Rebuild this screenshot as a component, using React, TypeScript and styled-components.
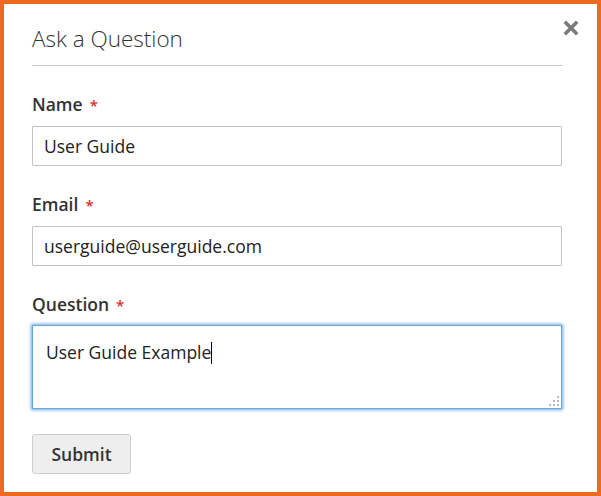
import React, { ReactElement } from 'react';
import styled, { createGlobalStyle } from 'styled-components';

const GlobalStyle = createGlobalStyle`
    html, body {
        margin: 0;
        padding: 0;
        background: #fff;
    }
    * {
        box-sizing: border-box;
    }
`;

const Frame = styled.div`
    width: 601px;
    height: 496px;
    border: 4px solid #ec6a21;
    background: #fff;
    position: relative;
    padding: 19px 35px 0 28px;
    font-family: 'Open Sans', 'Liberation Sans', sans-serif;
    color: #333;
`;

const Header = styled.header`
    border-bottom: 1px solid #c6c6c6;
    padding-bottom: 12px;
    margin-bottom: 28px;
`;

const Title = styled.h1`
    margin: 0;
    font-size: 22.5px;
    line-height: 30px;
    font-weight: 300;
    color: #333;
    transform: translateY(1px);
`;

const CloseButton = styled.button`
    position: absolute;
    top: 14px;
    right: 16px;
    width: 20px;
    height: 20px;
    padding: 0;
    border: 0;
    background: none;
    display: flex;
    align-items: center;
    justify-content: center;
    cursor: pointer;
`;

const Form = styled.form`
    display: flex;
    flex-direction: column;
`;

const Field = styled.div`
    margin-bottom: 28px;
`;

const Label = styled.label`
    display: block;
    font-size: 17.5px;
    line-height: 20px;
    height: 20px;
    font-weight: 600;
    color: #333;
    margin-bottom: 12px;
`;

const Required = styled.span`
    display: inline-block;
    line-height: 1;
    color: #e02b27;
    margin-left: 7px;
    font-size: 15px;
`;

const Input = styled.input`
    display: block;
    width: 100%;
    height: 40px;
    padding: 0 11px;
    border: 1px solid #c2c2c2;
    border-radius: 1px;
    font-family: 'Open Sans', 'Liberation Sans', sans-serif;
    font-size: 17.5px;
    color: #222;
    outline: none;
`;

const TextAreaBox = styled.div`
    position: relative;
    width: 100%;
    height: 84px;
    margin-top: -1px;
    padding: 11px 13px;
    border: 1px solid #68a8e0;
    box-shadow: 0 0 3px 1px #68a8e0;
    font-size: 17.5px;
    line-height: 30px;
    color: #222;
`;

const Caret = styled.span`
    display: inline-block;
    width: 1px;
    height: 22px;
    background: #000;
    vertical-align: -5px;
`;

const Grip = styled.svg`
    position: absolute;
    right: 2px;
    bottom: 2px;
`;

const SubmitButton = styled.button`
    align-self: flex-start;
    margin-top: -3px;
    width: 99px;
    height: 40px;
    background: #eee;
    border: 1px solid #cdcdcd;
    border-radius: 3px;
    font-family: 'Open Sans', 'Liberation Sans', sans-serif;
    font-size: 17.5px;
    font-weight: 600;
    color: #333;
    cursor: pointer;
`;

export default function App(): ReactElement {
    return (
        <>
            <GlobalStyle />
            <Frame>
                <Header>
                    <Title>Ask a Question</Title>
                </Header>
                <CloseButton aria-label="Close">
                    <svg width="16" height="16" viewBox="0 0 16 16">
                        <path
                            d="M1.8 1.8 L14.2 14.2 M14.2 1.8 L1.8 14.2"
                            stroke="#7a7a7a"
                            strokeWidth="3.6"
                            strokeLinecap="butt"
                        />
                    </svg>
                </CloseButton>
                <Form onSubmit={e => e.preventDefault()}>
                    <Field>
                        <Label htmlFor="name">
                            Name<Required>*</Required>
                        </Label>
                        <Input id="name" type="text" defaultValue="User Guide" />
                    </Field>
                    <Field>
                        <Label htmlFor="email">
                            Email<Required>*</Required>
                        </Label>
                        <Input
                            id="email"
                            type="text"
                            defaultValue="userguide@userguide.com"
                        />
                    </Field>
                    <Field>
                        <Label>
                            Question<Required>*</Required>
                        </Label>
                        <TextAreaBox>
                            User Guide Example
                            <Caret />
                            <Grip width="10" height="10" viewBox="0 0 10 10">
                                <rect x="8" y="0" width="2" height="2" fill="#bbb" />
                                <rect x="4" y="4" width="2" height="2" fill="#bbb" />
                                <rect x="8" y="4" width="2" height="2" fill="#bbb" />
                                <rect x="0" y="8" width="2" height="2" fill="#bbb" />
                                <rect x="4" y="8" width="2" height="2" fill="#bbb" />
                                <rect x="8" y="8" width="2" height="2" fill="#bbb" />
                            </Grip>
                        </TextAreaBox>
                    </Field>
                    <SubmitButton type="submit">Submit</SubmitButton>
                </Form>
            </Frame>
        </>
    );
}
